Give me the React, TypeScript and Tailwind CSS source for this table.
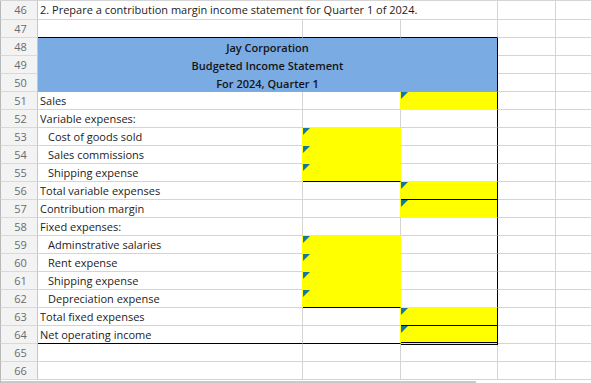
import React from "react";
import clsx from "clsx";

type Side = "grid" | "black" | "yellow" | "blue";

const bottomCls: Record<Side, string> = {
  grid: "border-b-[#d4d4d4]",
  black: "border-b-black",
  yellow: "border-b-[#ffff00]",
  blue: "border-b-[#7aabe3]",
};

const rightCls: Record<Side, string> = {
  grid: "border-r-[#d4d4d4]",
  black: "border-r-black",
  yellow: "border-r-[#ffff00]",
  blue: "border-r-[#7aabe3]",
};

type CellSpec = { fill?: boolean; b?: Side; r?: Side; double?: boolean };

type RowSpec = {
  n: number;
  label: string;
  indent?: boolean;
  a?: CellSpec;
  b?: CellSpec;
  c?: CellSpec;
};

// rows 51..64 of the statement
const rows: RowSpec[] = [
  { n: 51, label: "Sales", b: { r: "yellow" }, c: { fill: true, r: "black" } },
  { n: 52, label: "Variable expenses:", b: { b: "yellow" }, c: { r: "black" } },
  { n: 53, label: "Cost of goods sold", indent: true, a: { r: "yellow" }, b: { fill: true }, c: { r: "black" } },
  { n: 54, label: "Sales commissions", indent: true, a: { r: "yellow" }, b: { fill: true }, c: { r: "black" } },
  { n: 55, label: "Shipping expense", indent: true, a: { r: "yellow" }, b: { fill: true, b: "black" }, c: { r: "black", b: "yellow" } },
  { n: 56, label: "Total variable expenses", b: { r: "yellow" }, c: { fill: true, b: "black", r: "black" } },
  { n: 57, label: "Contribution margin", b: { r: "yellow" }, c: { fill: true, r: "black" } },
  { n: 58, label: "Fixed expenses:", b: { b: "yellow" }, c: { r: "black" } },
  { n: 59, label: "Adminstrative salaries", indent: true, a: { r: "yellow" }, b: { fill: true }, c: { r: "black" } },
  { n: 60, label: "Rent expense", indent: true, a: { r: "yellow" }, b: { fill: true }, c: { r: "black" } },
  { n: 61, label: "Shipping expense", indent: true, a: { r: "yellow" }, b: { fill: true }, c: { r: "black" } },
  { n: 62, label: "Depreciation expense", indent: true, a: { r: "yellow" }, b: { fill: true, b: "black" }, c: { r: "black", b: "yellow" } },
  { n: 63, label: "Total fixed expenses", b: { r: "yellow" }, c: { fill: true, b: "black", r: "black" } },
  { n: 64, label: "Net operating income", a: { b: "black" }, b: { b: "black", r: "yellow" }, c: { fill: true, r: "black", double: true } },
];

const Marker = () => (
  <svg className="absolute left-0 top-0" width="7" height="7" viewBox="0 0 7 7">
    <polygon points="0,0 7,0 0,7" fill="#13789b" />
  </svg>
);

const RowNum = ({ n }: { n: number }) => (
  <div className="border-l border-l-[#b8b8b8] border-r border-r-[#c6c6c6] border-b border-b-[#d9d9d9] bg-[#f3f3f3] text-center pl-[3px] pt-px leading-[16px] text-[#6b6b6b]">
    {n}
  </div>
);

const Cell = ({
  spec = {},
  children,
  className,
}: {
  spec?: CellSpec;
  children?: React.ReactNode;
  className?: string;
}) => {
  const b: Side = spec.b ?? (spec.fill ? "yellow" : "grid");
  const r: Side = spec.r ?? (spec.fill ? "yellow" : "grid");
  return (
    <div
      className={clsx(
        "relative border-r whitespace-nowrap pt-px leading-[16px]",
        rightCls[r],
        spec.double
          ? "z-10 h-[19px] self-start border-b-[3px] border-double border-b-black"
          : ["border-b", bottomCls[b]],
        spec.fill && "bg-[#ffff00]",
        className
      )}
    >
      {spec.fill && <Marker />}
      {children}
    </div>
  );
};

const Empty = ({ n }: { n: number }) => (
  <>
    <RowNum n={n} />
    <Cell />
    <Cell />
    <Cell />
    <Cell />
    <Cell className="border-r-0" />
  </>
);

export default function App() {
  return (
    <div className="w-[591px] h-[383px] overflow-hidden bg-white font-['Open_Sans',sans-serif] text-[11px] text-[#1c1c1c]">
      <div className="border-t border-t-[#d4d4d4] grid grid-cols-[38px_265px_98px_97px_58px_1fr] grid-rows-[19px] auto-rows-[18px]">
        {/* 46: instruction */}
        <RowNum n={46} />
        <Cell className="col-span-3 pl-[2px] pt-[2px]">
          2. Prepare a contribution margin income statement for Quarter 1 of 2024.
        </Cell>
        <Cell />
        <Cell className="border-r-0" />

        {/* 47 */}
        <RowNum n={47} />
        <Cell spec={{ b: "black" }} />
        <Cell spec={{ b: "black" }} />
        <Cell spec={{ b: "black" }} />
        <Cell />
        <Cell className="border-r-0" />

        {/* 48-50: title block */}
        <RowNum n={48} />
        <div className="col-span-3 row-span-3 bg-[#7aabe3] border-r border-r-black border-b border-b-[#7aabe3] pt-px flex flex-col items-center font-semibold leading-[18px] text-[#141414]">
          <div>Jay Corporation</div>
          <div>Budgeted Income Statement</div>
          <div>For 2024, Quarter 1</div>
        </div>
        <Cell />
        <Cell className="border-r-0" />
        <RowNum n={49} />
        <Cell />
        <Cell className="border-r-0" />
        <RowNum n={50} />
        <Cell />
        <Cell className="border-r-0" />

        {rows.map((row) => (
          <React.Fragment key={row.n}>
            <RowNum n={row.n} />
            <Cell spec={row.a} className={row.indent ? "pl-[10px]" : "pl-[2px]"}>
              {row.label}
            </Cell>
            <Cell spec={row.b} />
            <Cell spec={row.c} />
            <Cell />
            <Cell className="border-r-0" />
          </React.Fragment>
        ))}

        <Empty n={65} />
        <Empty n={66} />
      </div>
      <div className="h-[4px] border-l border-l-[#b8b8b8] pt-[1px]">
        <div className="h-[2px] w-[475px] bg-[#c9c9c9]" />
      </div>
    </div>
  );
}
